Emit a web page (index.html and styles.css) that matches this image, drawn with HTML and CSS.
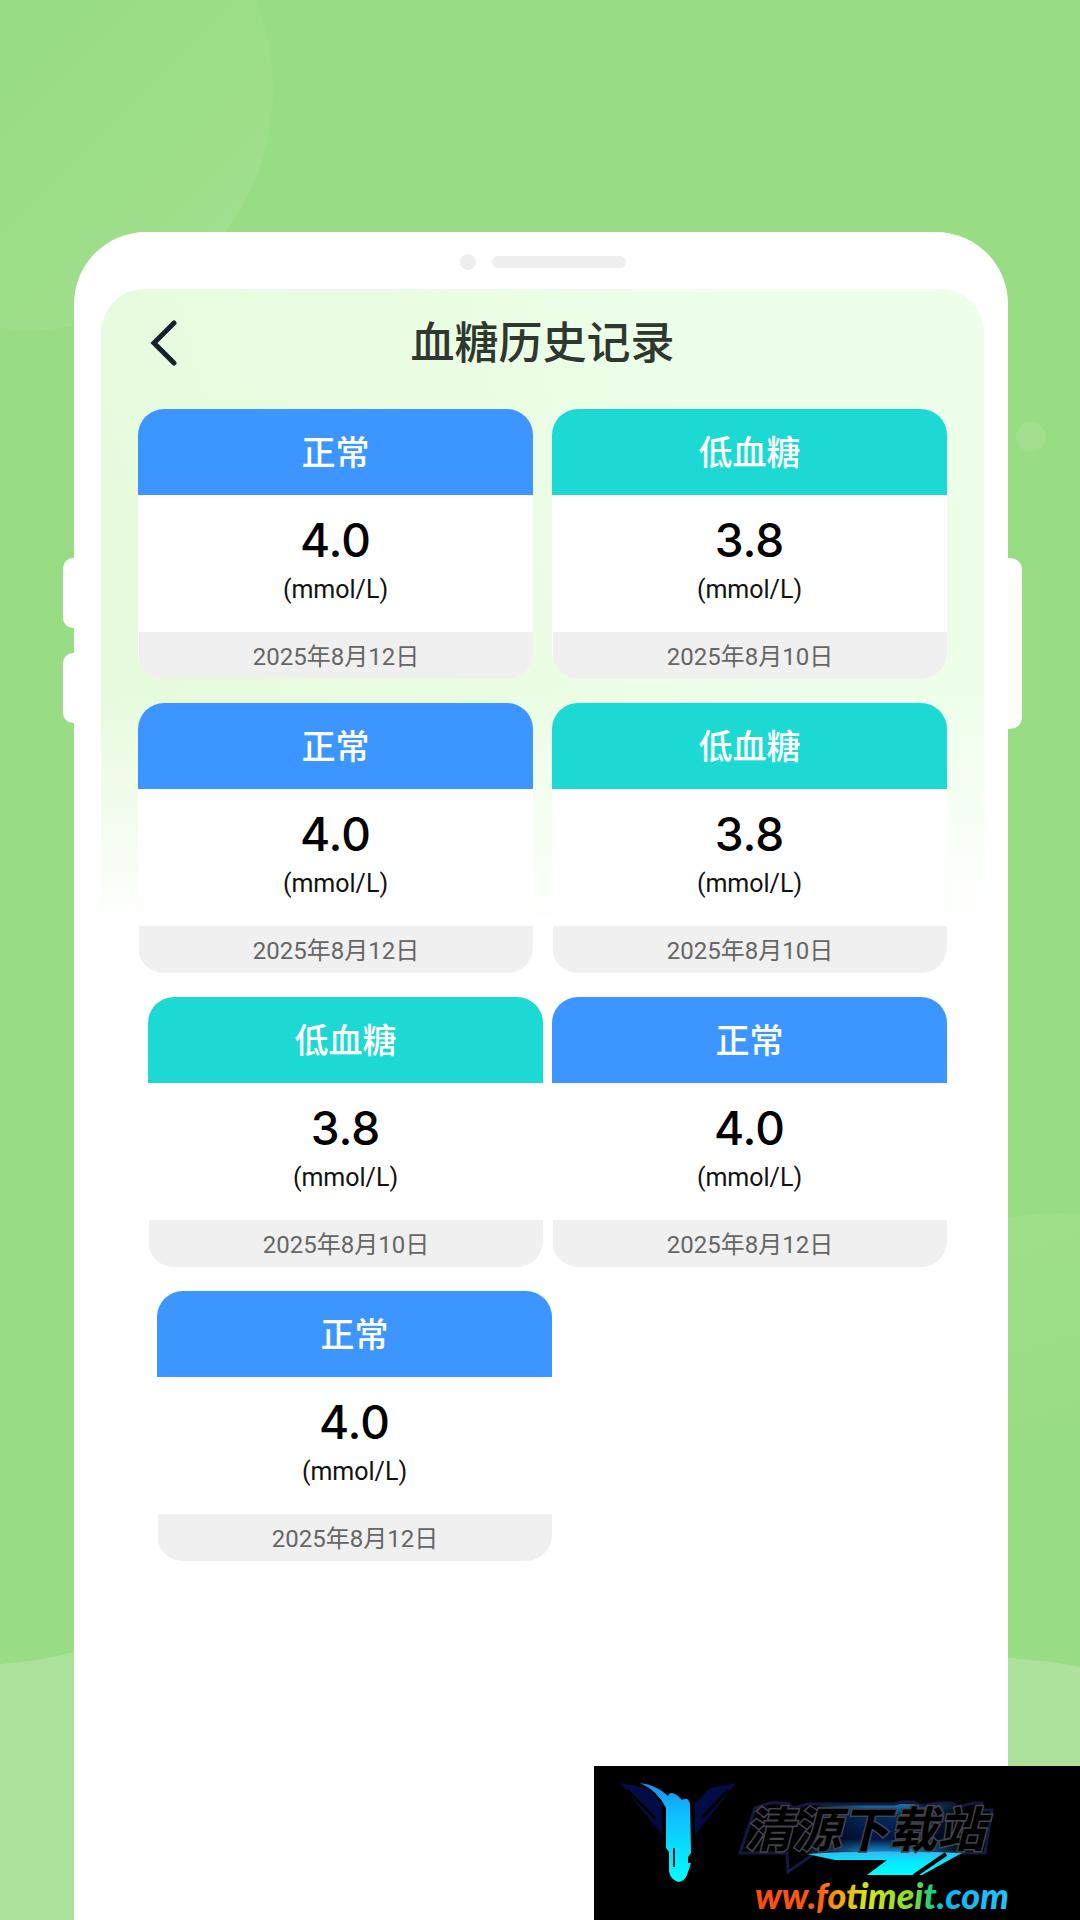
FILE: index.html
```html
<!DOCTYPE html>
<html lang="zh-CN">
<head>
<meta charset="utf-8">
<meta name="viewport" content="width=device-width, initial-scale=1">
<title>血糖历史记录</title>
<link rel="stylesheet" href="styles.css">
</head>
<body>
<div class="page">
  <div class="decor" aria-hidden="true">
    <span class="bubble bubble-top"></span>
    <span class="bubble bubble-dot"></span>
    <span class="bubble bubble-side"></span>
    <svg class="hills" viewBox="0 0 1080 280" preserveAspectRatio="none">
      <path d="M0 24Q40 21 74 12Q200 -20 400 40H700Q850 0 1008 18Q1046 20 1080 27V280H0Z" fill="#ace29b"/>
    </svg>
  </div>

  <div class="phone">
    <span class="key key-up"></span>
    <span class="key key-down"></span>
    <span class="key key-power"></span>
    <div class="speaker"><span class="camera"></span><span class="slot"></span></div>

    <main class="screen">
      <header class="topbar">
        <button class="back" type="button" aria-label="返回">
          <svg width="28" height="46" viewBox="0 0 28 46" fill="none" stroke="#17202e" stroke-width="5" stroke-linecap="round" stroke-linejoin="miter"><path d="M24 3L4 23L24 43"/></svg>
        </button>
        <h1 class="title">血糖历史记录</h1>
      </header>

      <ul class="records">
        <li class="card normal"><h2 class="status">正常</h2><div class="reading"><strong class="value">4.0</strong><span class="unit">(mmol/L)</span></div><time class="date" datetime="2025-08-12">2025年8月12日</time></li>
        <li class="card low"><h2 class="status">低血糖</h2><div class="reading"><strong class="value">3.8</strong><span class="unit">(mmol/L)</span></div><time class="date" datetime="2025-08-10">2025年8月10日</time></li>
        <li class="card normal"><h2 class="status">正常</h2><div class="reading"><strong class="value">4.0</strong><span class="unit">(mmol/L)</span></div><time class="date" datetime="2025-08-12">2025年8月12日</time></li>
        <li class="card low"><h2 class="status">低血糖</h2><div class="reading"><strong class="value">3.8</strong><span class="unit">(mmol/L)</span></div><time class="date" datetime="2025-08-10">2025年8月10日</time></li>
        <li class="card low indent"><h2 class="status">低血糖</h2><div class="reading"><strong class="value">3.8</strong><span class="unit">(mmol/L)</span></div><time class="date" datetime="2025-08-10">2025年8月10日</time></li>
        <li class="card normal"><h2 class="status">正常</h2><div class="reading"><strong class="value">4.0</strong><span class="unit">(mmol/L)</span></div><time class="date" datetime="2025-08-12">2025年8月12日</time></li>
        <li class="card normal indent-more"><h2 class="status">正常</h2><div class="reading"><strong class="value">4.0</strong><span class="unit">(mmol/L)</span></div><time class="date" datetime="2025-08-12">2025年8月12日</time></li>
      </ul>
    </main>
  </div>

  <div class="sitemark">
    <svg width="486" height="154" viewBox="0 0 486 154" role="img" aria-label="清源下载站 ww.fotimeit.com">
      <defs>
        <linearGradient id="beam" x1="0" y1="0" x2="0" y2="1"><stop offset="0" stop-color="#168cf0"/><stop offset=".3" stop-color="#10bcff"/><stop offset="1" stop-color="#00ffff"/></linearGradient>
        <linearGradient id="swoosh" x1="0" y1="0" x2="0" y2="1"><stop offset="0" stop-color="#35b6ee"/><stop offset=".4" stop-color="#08e4ff"/><stop offset="1" stop-color="#00ffff"/></linearGradient>
        <linearGradient id="panel" x1="0" y1="0" x2="0" y2="1"><stop offset="0" stop-color="#1879ad"/><stop offset=".25" stop-color="#06295c"/><stop offset=".7" stop-color="#021445"/><stop offset="1" stop-color="#1b9bdc"/></linearGradient>
        <linearGradient id="fade" x1="0" y1="0" x2="1" y2="0"><stop offset="0" stop-color="#000"/><stop offset=".4" stop-color="#000" stop-opacity="0"/><stop offset=".65" stop-color="#000" stop-opacity="0"/><stop offset="1" stop-color="#000"/></linearGradient>
        <linearGradient id="rainbow" x1="0" y1="0" x2="1" y2="0"><stop offset="0" stop-color="#ff4a0c"/><stop offset=".25" stop-color="#ff5a10"/><stop offset=".34" stop-color="#f5a80c"/><stop offset=".44" stop-color="#d4e615"/><stop offset=".62" stop-color="#84dc2c"/><stop offset=".7" stop-color="#15cf88"/><stop offset=".76" stop-color="#10b4f5"/><stop offset="1" stop-color="#20c4ff"/></linearGradient>
      </defs>
      <g fill="#030b45">
        <path d="M26 17L53 22L68 38V69Z"/>
        <path d="M142 17L116 22L101 37V69Z"/>
      </g>
      <path d="M33 24L61 52M134 24L108 52" stroke="#000" stroke-width="3"/>
      <path d="M46 17Q63 19 74 30Q76 24 84 30L88 34Q94 30 96 38L97 87L94 91V97H97L93 109Q90 116 84 116Q76 113 75 105V86L72 82V42Q64 25 46 17Z" fill="url(#beam)"/>
      <path d="M80 82V101" stroke="#00202a" stroke-width="2"/>
      <path d="M225 38H370L366 88H215Z" fill="url(#panel)"/>
      <path d="M205 37H375V89H205Z" fill="url(#fade)"/>
      <path d="M146 87L161 42L176 37H193L200 42L213 38H300L308 36H320L326 40L344 37H358L364 41L380 37H388V44H398L391 87H221L194 106L193 87Z" fill="none" stroke="#14193f" stroke-width="3"/>
      <path d="M213 88Q280 83 368 87L328 109H273L293 94H241Z" fill="url(#swoosh)"/>
      <path d="M352 88L320 110" stroke="#000" stroke-width="4"/>
      <text class="mark-name" x="151" y="81">清源下载站</text>
      <text class="mark-url" x="161" y="143" fill="url(#rainbow)">ww.fotimeit.com</text>
    </svg>
  </div>
</div>
</body>
</html>
```
FILE: styles.css
```css
* { box-sizing: border-box; }

body {
  margin: 0;
  font-family: Roboto, "Noto Sans CJK SC", sans-serif;
  color: #000;
}

.page {
  position: relative;
  display: flex;
  min-height: 100vh;
  padding: 232px 72px 0 74px;
  overflow: hidden;
  background: #98dc83;
}

/* Background shapes */
.decor { position: absolute; inset: 0; }
.bubble { position: absolute; border-radius: 50%; }
.bubble-top {
  left: -211px;
  top: -154px;
  width: 484px;
  height: 484px;
  background: linear-gradient(135deg, #98dc83 45%, #a1df8e 90%);
}
.bubble-dot {
  right: 34px;
  top: 422px;
  width: 30px;
  height: 30px;
  background: #a1df8e;
}
.bubble-side {
  right: -220px;
  top: 1213px;
  width: 480px;
  height: 480px;
  background: linear-gradient(160deg, #a0df8c 10%, #98dc83 50%);
}
.hills {
  position: absolute;
  left: 0;
  bottom: 0;
  width: 100%;
  height: 280px;
}

/* Phone frame */
.phone {
  position: relative;
  flex: 1;
  display: flex;
  flex-direction: column;
  padding: 0 24px 0 27px;
  border-radius: 72px 72px 0 0;
  background: #fff;
}
.key { position: absolute; background: #fff; }
.key-up, .key-down {
  left: -11px;
  width: 12px;
  height: 70px;
  border-radius: 10px 0 0 10px;
}
.key-up { top: 326px; }
.key-down { top: 421px; }
.key-power {
  right: -14px;
  top: 326px;
  width: 15px;
  height: 171px;
  border-radius: 0 12px 12px 0;
}
.speaker {
  display: flex;
  align-items: center;
  justify-content: center;
  gap: 16px;
  height: 57px;
  padding-top: 3px;
}
.camera {
  width: 16px;
  height: 16px;
  border-radius: 50%;
  background: #eee;
}
.slot {
  width: 134px;
  height: 12px;
  border-radius: 6px;
  background: #eee;
}

/* App screen */
.screen {
  flex: 1;
  padding: 0 37px 48px;
  border-radius: 44px 44px 0 0;
  background:
    linear-gradient(180deg, rgba(255, 255, 255, 0) 400px, #fff 640px),
    linear-gradient(75deg, #e5fadb 20%, #edffe9 80%);
}
.topbar {
  display: grid;
  grid-template-columns: 52px 1fr 52px;
  align-items: center;
  height: 108px;
  margin-bottom: 12px;
}
.back {
  display: flex;
  justify-content: center;
  padding: 0;
  border: 0;
  background: none;
}
.title {
  margin: 0;
  padding-top: 2px;
  font-size: 44px;
  line-height: 64px;
  font-weight: 500;
  text-align: center;
  color: #2f382e;
}

/* Record cards */
.records {
  display: grid;
  grid-template-columns: 1fr 1fr;
  gap: 24px 19px;
  margin: 0;
  padding: 0;
  list-style: none;
}
.card {
  display: flex;
  flex-direction: column;
  border-radius: 26px;
  overflow: hidden;
  background: #fff;
  text-align: center;
}
.indent { margin: 0 -10px 0 10px; }
.indent-more { margin: 0 -19px 0 19px; }
.status {
  margin: 0;
  padding-top: 2px;
  font-size: 34px;
  line-height: 84px;
  font-weight: 500;
  color: #fff;
}
.normal .status { background: #3d96ff; }
.low .status { background: #1dd9d3; }
.reading {
  display: flex;
  flex-direction: column;
  gap: 10px;
  padding: 21px 0 26px;
}
.value {
  font-family: Inter, sans-serif;
  font-size: 46px;
  line-height: 48px;
  font-weight: 500;
}
.unit {
  font-size: 25px;
  line-height: 32px;
  color: #111;
}
.date {
  margin-left: 1px;
  padding-top: 4px;
  font-size: 24px;
  line-height: 43px;
  color: #666;
  background: #f0f0f0;
}

/* Download-site mark */
.sitemark {
  position: absolute;
  right: 0;
  bottom: 0;
  background: #000;
}
.sitemark svg { display: block; }
.mark-name {
  font-family: "Noto Sans CJK SC", sans-serif;
  font-size: 48px;
  font-weight: 700;
  font-style: italic;
  fill: #000;
  stroke: #44444f;
  stroke-width: 3px;
  paint-order: stroke;
}
.mark-url {
  font-family: Lato, sans-serif;
  font-size: 36px;
  font-weight: 900;
  font-style: italic;
}
```
